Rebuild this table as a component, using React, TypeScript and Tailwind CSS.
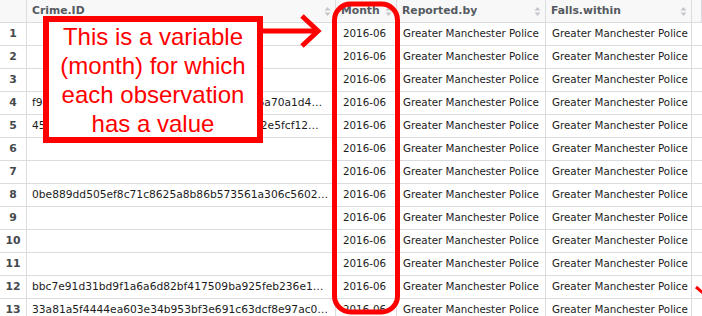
import React from "react";

const ids: Record<number, string> = {
  4: "f9c3e8a1b27d04f65e9a0c3b81d7f2e4a9d6a70a1d4…",
  5: "45b1d0e7c93a2f8e64b0d5a17c3e9f28b672e5fcf12…",
  8: "0be889dd505ef8c71c8625a8b86b573561a306c5602…",
  12: "bbc7e91d31bd9f1a6a6d82bf417509ba925feb236e1…",
  13: "33a81a5f4444ea603e34b953bf3e691c63dcf8e97ac0…",
};

const rows = Array.from({ length: 13 }, (_, i) => i + 1);

function SortIcon() {
  return (
    <svg width="7" height="11" viewBox="0 0 7 11" className="shrink-0">
      <path d="M3.5 1 L6.5 4.5 L0.5 4.5 Z" fill="#c4c6ca" />
      <path d="M3.5 10 L6.5 6.5 L0.5 6.5 Z" fill="#c4c6ca" />
    </svg>
  );
}

function Header({ label, last }: { label?: string; last?: boolean }) {
  return (
    <div className="h-[23px] border-b border-r border-[#dadce0] bg-[#f8f8f9] flex items-center justify-between pl-[5px] pr-[4px] overflow-hidden">
      <span className="font-bold text-[#555a60] truncate text-[10.8px]">{label}</span>
      {label && !last && <SortIcon />}
    </div>
  );
}

export default function App() {
  return (
    <div className="relative w-[702px] h-[316px] overflow-hidden bg-white font-['DejaVu_Sans',sans-serif] text-[10.3px]">
      <div className="grid grid-cols-[27px_309px_61px_149px_146px_1fr]">
        <Header />
        <Header label="Crime.ID" />
        <Header label="Month" />
        <Header label="Reported.by" />
        <Header label="Falls.within" />
        <Header label=" " last />
        {rows.map((r) => (
          <React.Fragment key={r}>
            <div className="h-[23px] border-b border-r border-[#dadce0] flex items-center justify-center font-bold text-[#45494e] text-[10.8px]">
              {r}
            </div>
            <div className="h-[23px] border-b border-r border-[#dadce0] flex items-center pl-[5px] pr-[3px] text-[#1c1c1c] overflow-hidden whitespace-nowrap text-[10.7px]">
              <span className="truncate">{ids[r] ?? ""}</span>
            </div>
            <div className="h-[23px] border-b border-r border-[#dadce0] flex items-center pl-[7px] text-[#1c1c1c] whitespace-nowrap">
              2016-06
            </div>
            <div className="h-[23px] border-b border-r border-[#dadce0] flex items-center pl-[6px] text-[#1c1c1c] whitespace-nowrap overflow-hidden">
              Greater Manchester Police
            </div>
            <div className="h-[23px] border-b border-r border-[#dadce0] flex items-center pl-[6px] text-[#1c1c1c] whitespace-nowrap overflow-hidden">
              Greater Manchester Police
            </div>
            <div className="h-[23px] border-b border-[#dadce0]" />
          </React.Fragment>
        ))}
      </div>

      {/* annotation box */}
      <div className="absolute left-[43px] top-[16px] w-[220px] h-[127px] border-[6px] border-[#ff0000] bg-white flex items-center justify-center">
        <p className="text-center text-[#ff0000] font-['Liberation_Sans',Arial,sans-serif] text-[24px] leading-[29px]">
          This is a variable
          <br />
          (month) for which
          <br />
          each observation
          <br />
          has a value
        </p>
      </div>

      {/* arrow and highlight */}
      <svg className="absolute left-0 top-0 pointer-events-none" width="702" height="316" viewBox="0 0 702 316">
        <line x1="262" y1="31" x2="316" y2="31" stroke="#ff0000" strokeWidth="5" />
        <polyline points="302,16 318,31 302,46" fill="none" stroke="#ff0000" strokeWidth="5" strokeLinejoin="miter" />
        <rect x="334.5" y="4" width="63" height="308" rx="16" fill="none" stroke="#ff0000" strokeWidth="5" />
        <line x1="696" y1="287" x2="703" y2="293" stroke="#ff0000" strokeWidth="3" />
      </svg>
    </div>
  );
}
